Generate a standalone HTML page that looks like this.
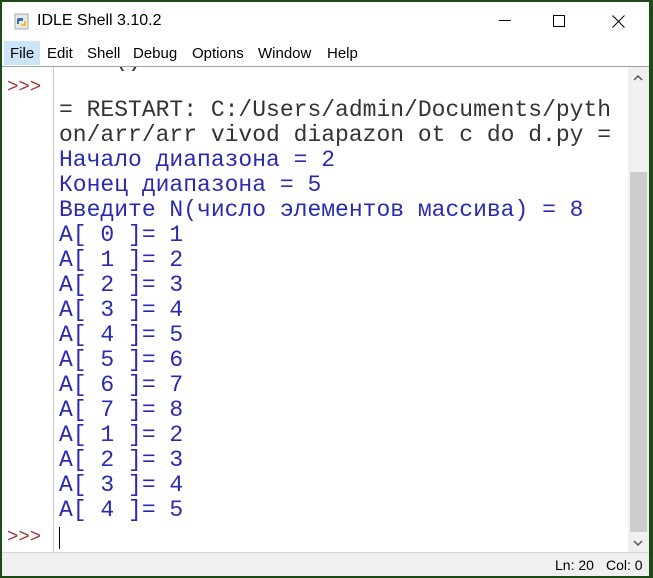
<!DOCTYPE html>
<html><head><meta charset="utf-8"><style>
html,body{margin:0;padding:0;width:653px;height:578px;overflow:hidden;background:#1d4a17;}
.win{position:absolute;left:2px;top:2px;width:647px;height:573px;background:#fff;}
.title{position:absolute;left:0;top:0;width:647px;height:38px;background:#fff;font:16px "Liberation Sans",sans-serif;color:#000;}
.title .t{position:absolute;left:35px;top:10px;}
.menu{position:absolute;left:0;top:38px;width:647px;height:26px;font:15px "Liberation Sans",sans-serif;}
.menu span{position:absolute;top:5px;}
.area{position:absolute;left:0;top:64px;width:647px;height:486px;overflow:hidden;background:#fff;border-top:1px solid #a0a0a0;}
.gut{position:absolute;left:51px;top:0;width:1px;height:486px;background:#c8c8c8;}
.mono{font-family:"Courier New","Liberation Mono",monospace;font-size:23px;line-height:25px;white-space:pre;position:absolute;}
.txt{left:57px;top:-19px;color:#2a2ab0;}
.k{color:#333;}
.p{color:#a03838;left:5px;font-size:19px;}
.sb{position:absolute;left:626px;top:0;width:21px;height:486px;background:#f0f0f0;}
.thumb{position:absolute;left:2px;top:105px;width:17px;height:360px;background:#cdcdcd;}
.status{position:absolute;left:0;top:550px;width:647px;height:23px;background:#f0f0f0;border-top:1px solid #d8d8d8;font:14px "Liberation Sans",sans-serif;}
</style></head><body>
<div class="win">
 <div class="title">
  <svg style="position:absolute;left:12px;top:11px" width="16" height="17" viewBox="0 0 16 17"><rect x="1" y="1" width="13" height="15" fill="#e8e8e8" stroke="#aaa"/><path d="M4 5h5v3H5v3H3V6z" fill="#3a6fb0"/><path d="M12 8v5H7v-2h3V8z" fill="#f0c030"/></svg>
  <span class="t">IDLE Shell 3.10.2</span>
  <svg style="position:absolute;left:497px;top:18px" width="12" height="2"><rect width="12" height="1" fill="#000"/></svg>
  <svg style="position:absolute;left:551px;top:13px" width="12" height="12"><rect x=".5" y=".5" width="11" height="11" fill="none" stroke="#000"/></svg>
  <svg style="position:absolute;left:610px;top:13px" width="13" height="13"><path d="M.5 .5l12 12M12.5 .5l-12 12" stroke="#000"/></svg>
 </div>
 <div class="menu">
  <div style="position:absolute;left:2px;top:1px;width:36px;height:24px;background:#cce4f7"></div>
  <span style="left:8px">File</span><span style="left:45px">Edit</span><span style="left:85px">Shell</span><span style="left:131px">Debug</span><span style="left:190px">Options</span><span style="left:256px">Window</span><span style="left:325px">Help</span>
 </div>
 <div class="area">
  <div class="gut"></div>
  <div class="mono p" style="top:8px">&gt;&gt;&gt;</div>
  <div class="mono p" style="top:458px">&gt;&gt;&gt;</div>
  <div class="mono txt"><span class="k">    ()
 
= RESTART: C:/Users/admin/Documents/pyth
on/arr/arr vivod diapazon ot c do d.py =</span>
Начало диапазона = 2
Конец диапазона = 5
Введите N(число элементов массива) = 8
A[ 0 ]= 1
A[ 1 ]= 2
A[ 2 ]= 3
A[ 3 ]= 4
A[ 4 ]= 5
A[ 5 ]= 6
A[ 6 ]= 7
A[ 7 ]= 8
A[ 1 ]= 2
A[ 2 ]= 3
A[ 3 ]= 4
A[ 4 ]= 5</div>
  <div style="position:absolute;left:57px;top:460px;width:1px;height:22px;background:#000"></div>
  <div class="sb"><div class="thumb"></div>
   <svg style="position:absolute;left:5px;top:8px" width="10" height="6"><path d="M1 5l4-4 4 4" stroke="#555" fill="none" stroke-width="1.5"/></svg>
   <svg style="position:absolute;left:5px;top:473px" width="10" height="6"><path d="M1 1l4 4 4-4" stroke="#555" fill="none" stroke-width="1.5"/></svg>
  </div>
 </div>
 <div class="status"><span style="position:absolute;left:553px;top:4px">Ln: 20</span><span style="position:absolute;left:604px;top:4px">Col: 0</span></div>
</div>
</body></html>
